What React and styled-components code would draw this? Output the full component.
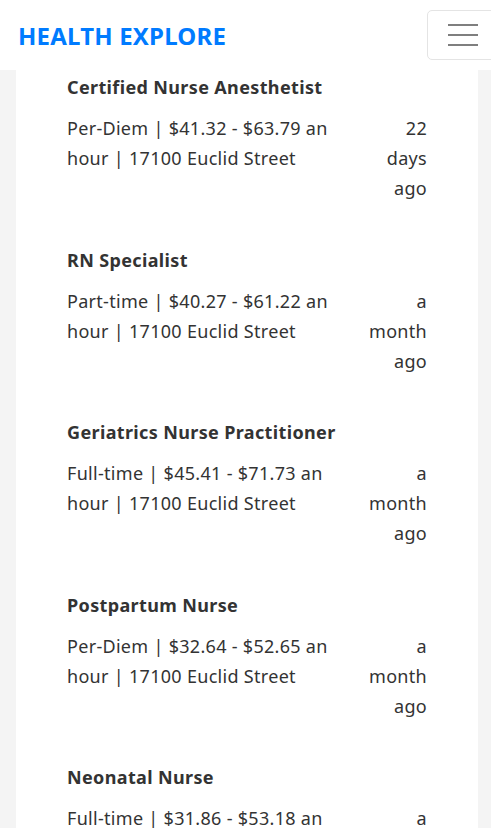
import React from 'react';
import styled, { createGlobalStyle } from 'styled-components';

const GlobalStyle = createGlobalStyle`
  html, body {
    margin: 0;
    padding: 0;
    background: #f4f4f4;
    overflow: hidden;
  }
  body {
    font-family: "Segoe UI", "Noto Sans", "Open Sans", sans-serif;
    color: #333;
  }
`;

const jobs = [
    { id: 1, title: 'Certified Nurse Anesthetist', type: 'Per-Diem', pay: '$41.32 - $63.79 an hour', address: '17100 Euclid Street', posted: '22 days ago' },
    { id: 2, title: 'RN Specialist', type: 'Part-time', pay: '$40.27 - $61.22 an hour', address: '17100 Euclid Street', posted: 'a month ago' },
    { id: 3, title: 'Geriatrics Nurse Practitioner', type: 'Full-time', pay: '$45.41 - $71.73 an hour', address: '17100 Euclid Street', posted: 'a month ago' },
    { id: 4, title: 'Postpartum Nurse', type: 'Per-Diem', pay: '$32.64 - $52.65 an hour', address: '17100 Euclid Street', posted: 'a month ago' },
    { id: 5, title: 'Neonatal Nurse', type: 'Full-time', pay: '$31.86 - $53.18 an hour', address: '17100 Euclid Street', posted: 'a month ago' },
];

const Header = styled.header`
    height: 70px;
    background: #fff;
    display: flex;
    align-items: center;
    padding-left: 18px;
    overflow: hidden;
`;

const Brand = styled.div`
    color: #007bff;
    font-size: 24px;
    font-weight: 700;
    letter-spacing: 0.2px;
`;

const Toggler = styled.button`
    margin-left: auto;
    margin-right: -10px;
    width: 74px;
    height: 50px;
    background: #fff;
    border: 1px solid #e4e4e4;
    border-radius: 5px;
    padding: 0 0 0 20px;
    display: flex;
    flex-direction: column;
    justify-content: center;
    gap: 8px;
`;

const Bar = styled.span`
    display: block;
    width: 30px;
    height: 2px;
    background: #7f7f7f;
`;

const Card = styled.main`
    margin: 0 13px 0 16px;
    background: #fff;
    padding: 4px 51px 0;
    height: 758px;
    overflow: hidden;
`;

const Job = styled.article`
    margin-bottom: 43.6px;
`;

const Title = styled.h3`
    margin: 0 0 12px;
    font-size: 18px;
    line-height: 27px;
    font-weight: 700;
    letter-spacing: 0.36px;
    color: #333;
`;

const Row = styled.div`
    display: flex;
    justify-content: space-between;
    gap: 20px;
    font-size: 18px;
    line-height: 30px;
    letter-spacing: 0.3px;
`;

const Desc = styled.div`
    flex: 0 1 280px;
`;

const Posted = styled.div`
    width: min-content;
    text-align: right;
`;

const App = () => {
    return (
        <>
            <GlobalStyle />
            <Header>
                <Brand>HEALTH EXPLORE</Brand>
                <Toggler aria-label="menu">
                    <Bar />
                    <Bar />
                    <Bar />
                </Toggler>
            </Header>
            <Card>
                {
                    jobs.map(it => (
                        <Job key={it.id}>
                            <Title>{it.title}</Title>
                            <Row>
                                <Desc>{it.type} | {it.pay} | {it.address}</Desc>
                                <Posted>{it.posted}</Posted>
                            </Row>
                        </Job>
                    ))
                }
            </Card>
        </>
    )
}

export default App;
